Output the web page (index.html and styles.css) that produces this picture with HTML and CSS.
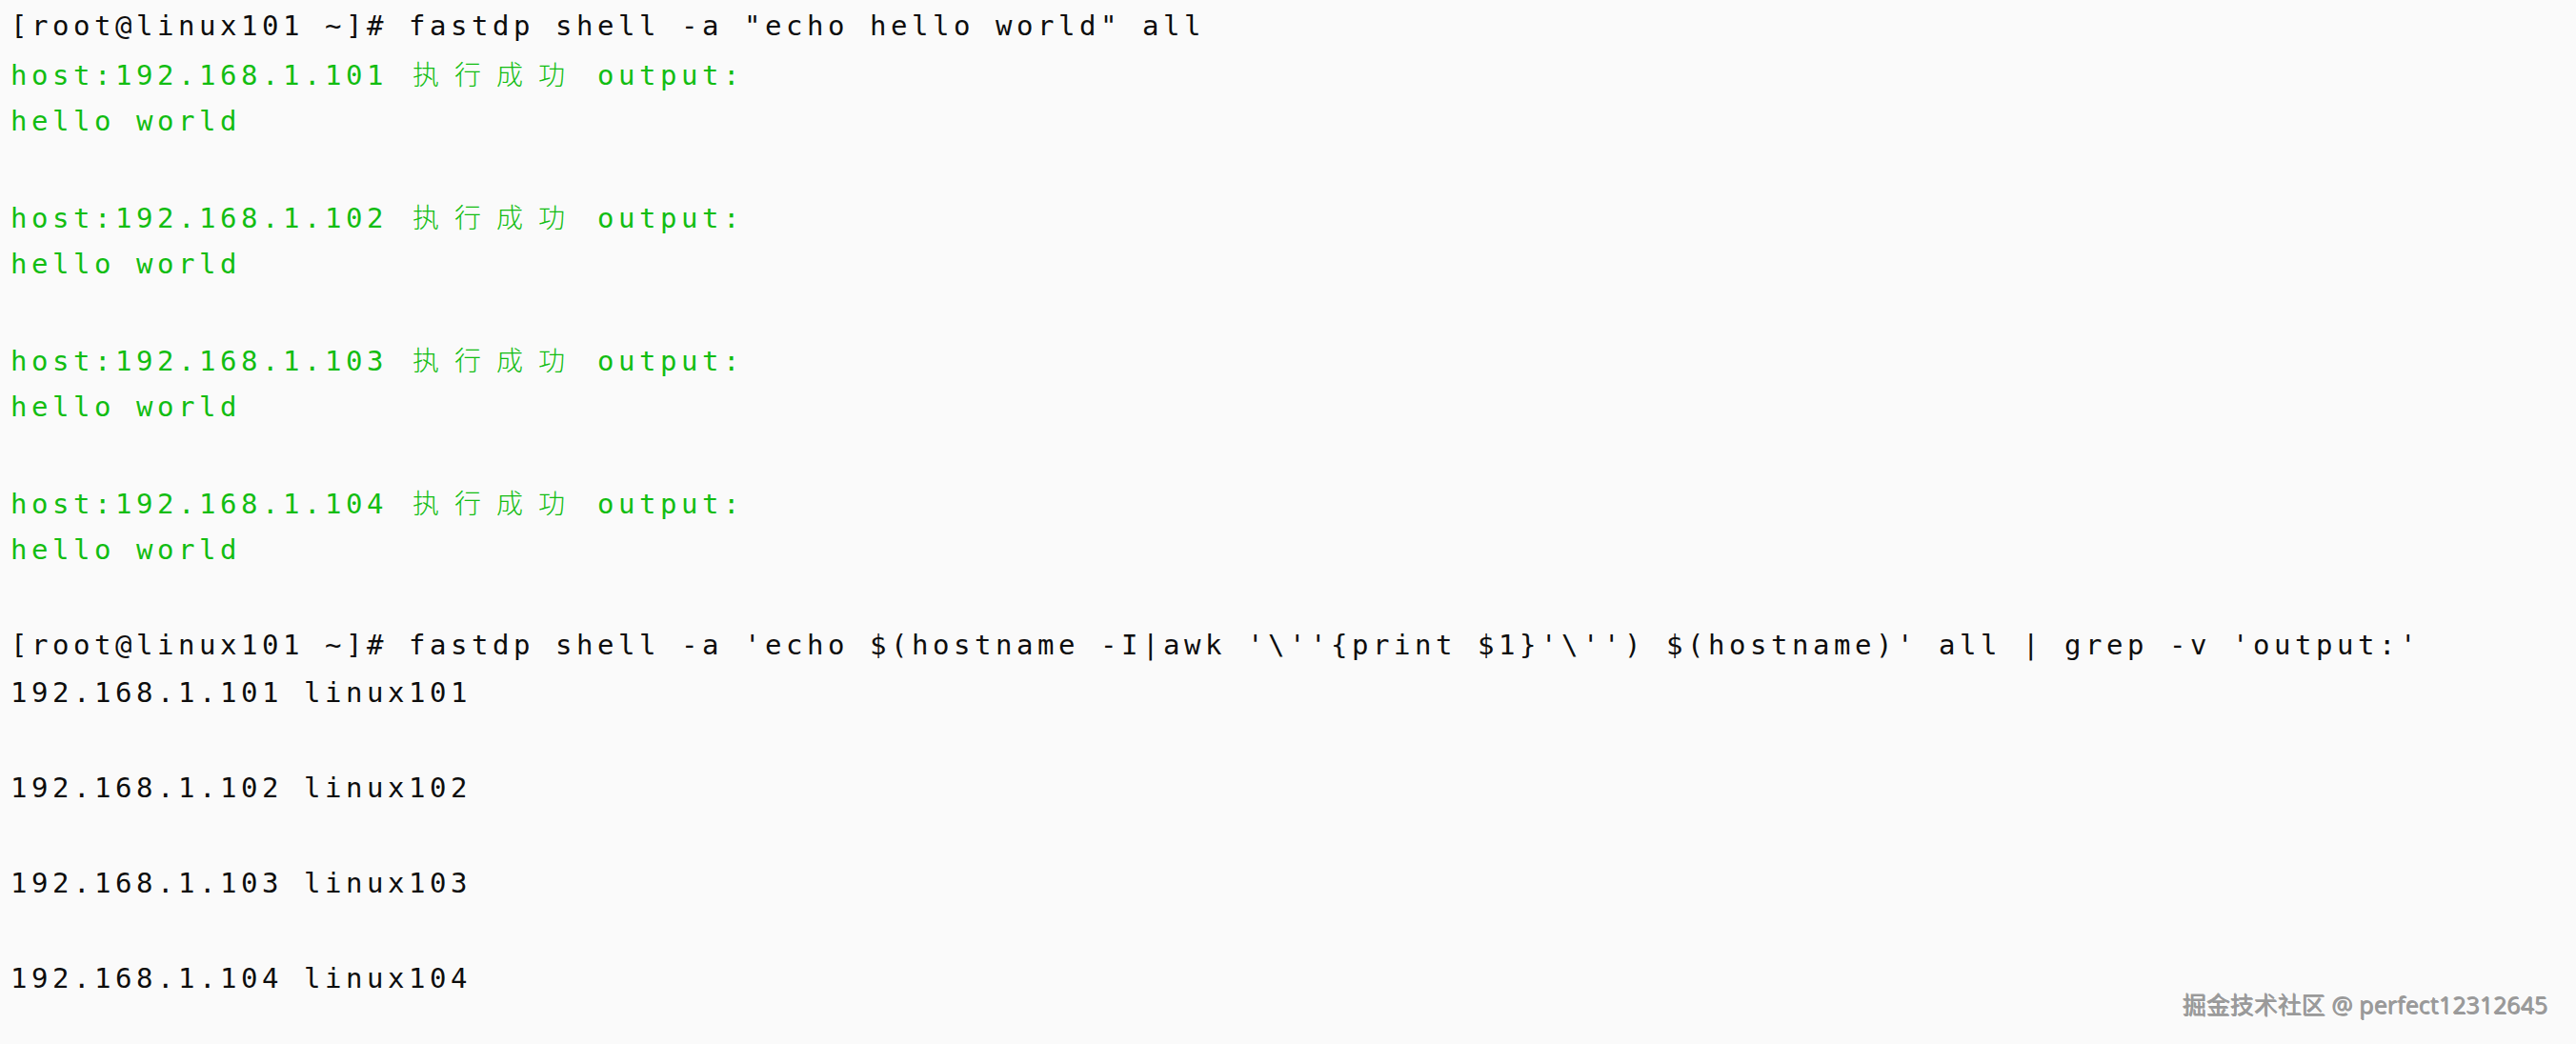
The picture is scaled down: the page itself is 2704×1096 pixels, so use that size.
FILE: index.html
```html
<!DOCTYPE html>
<html lang="zh-CN">
<head>
<meta charset="utf-8">
<title>fastdp shell</title>
<link rel="stylesheet" href="styles.css">
</head>
<body>
<div class="term">
<div class="line">[root@linux101 ~]# fastdp shell -a "echo hello world" all</div>
<div class="line ok">host:192.168.1.101 <span class="cjk">执行成功</span> output:</div>
<div class="line ok">hello world</div>
<div class="line"></div>
<div class="line ok">host:192.168.1.102 <span class="cjk">执行成功</span> output:</div>
<div class="line ok">hello world</div>
<div class="line"></div>
<div class="line ok">host:192.168.1.103 <span class="cjk">执行成功</span> output:</div>
<div class="line ok">hello world</div>
<div class="line"></div>
<div class="line ok">host:192.168.1.104 <span class="cjk">执行成功</span> output:</div>
<div class="line ok">hello world</div>
<div class="line"></div>
<div class="line">[root@linux101 ~]# fastdp shell -a 'echo $(hostname -I|awk '\''{print $1}'\'') $(hostname)' all | grep -v 'output:'</div>
<div class="line">192.168.1.101 linux101</div>
<div class="line"></div>
<div class="line">192.168.1.102 linux102</div>
<div class="line"></div>
<div class="line">192.168.1.103 linux103</div>
<div class="line"></div>
<div class="line">192.168.1.104 linux104</div>
</div>
<div class="watermark">掘金技术社区 @ perfect12312645</div>
</body>
</html>
```
FILE: styles.css
```css
html, body {
  margin: 0;
  padding: 0;
  background: #fafafa;
  width: 2704px;
  height: 1096px;
  overflow: hidden;
}

body {
  position: relative;
}

.term {
  padding: 2px 0 0 11px;
  font-family: "DejaVu Sans Mono", "Noto Sans CJK SC", monospace;
  font-size: 29px;
  letter-spacing: 4.54px;
  line-height: 50px;
  color: #0d0d0d;
}

.line {
  height: 50px;
  white-space: pre;
}

.ok {
  color: #12bd12;
}

.cjk {
  font-family: "Noto Sans CJK SC", sans-serif;
  font-size: 28px;
  font-weight: 300;
  letter-spacing: 16px;
  padding-left: 4px;
  margin-right: -4px;
}

.watermark {
  position: absolute;
  right: 29px;
  bottom: 26px;
  font-family: "Noto Sans", "Noto Sans CJK SC", sans-serif;
  font-size: 25px;
  line-height: 30px;
  color: #9a9a9a;
  text-shadow: -1px -1px 0 rgba(70, 70, 70, 0.55), 1px 1px 1px rgba(255, 255, 255, 0.9);
  white-space: nowrap;
}
```
